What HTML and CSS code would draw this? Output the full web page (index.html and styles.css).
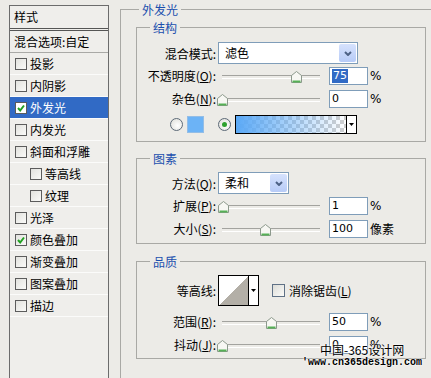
FILE: index.html
```html
<!DOCTYPE html>
<html lang="zh-CN">

<head>
    <meta charset="UTF-8">
    <title>图层样式 - 外发光</title>
    <link rel="stylesheet" href="styles.css">
</head>

<body>

    <div class="dialog">
        <div class="style-list">
            <div class="list-head">样式</div>
            <div class="list-blend">混合选项:自定</div>
            <div class="list-item"><span class="check"></span>投影</div>
            <div class="list-item"><span class="check"></span>内阴影</div>
            <div class="list-item active"><span class="check on"><svg viewBox="0 0 10 10"><path d="M2 5 L4.2 7.5 L8 2.5"/></svg></span>外发光</div>
            <div class="list-item"><span class="check"></span>内发光</div>
            <div class="list-item"><span class="check"></span>斜面和浮雕</div>
            <div class="list-item sub"><span class="check"></span>等高线</div>
            <div class="list-item sub"><span class="check"></span>纹理</div>
            <div class="list-item"><span class="check"></span>光泽</div>
            <div class="list-item"><span class="check on"><svg viewBox="0 0 10 10"><path d="M2 5 L4.2 7.5 L8 2.5"/></svg></span>颜色叠加</div>
            <div class="list-item"><span class="check"></span>渐变叠加</div>
            <div class="list-item"><span class="check"></span>图案叠加</div>
            <div class="list-item"><span class="check"></span>描边</div>
        </div>

        <div class="panel">
            <div class="outer">
                <div class="group-title outer-title">外发光</div>

                <!-- 结构 -->
                <div class="group first">
                    <div class="group-title">结构</div>
                    <div class="row select-row">
                        <span class="label">混合模式:</span>
                        <div class="select wide">
                            <span class="select-value">滤色</span>
                            <span class="select-btn"><svg viewBox="0 0 8 5"><path d="M1 1 L4 4 L7 1"/></svg></span>
                        </div>
                    </div>
                    <div class="row">
                        <span class="label">不透明度(<u>O</u>):</span>
                        <div class="slider"><span class="thumb" style="left: 76%"><svg viewBox="0 0 11 12"><polygon points="0.5,4.5 5.5,0.5 10.5,4.5 10.5,11.5 0.5,11.5"/><path d="M1.5 10.5 H9.5"/></svg></span></div>
                        <div class="num"><span class="sel">75</span></div>
                        <span class="unit">%</span>
                    </div>
                    <div class="row">
                        <span class="label">杂色(<u>N</u>):</span>
                        <div class="slider"><span class="thumb" style="left: 0%"><svg viewBox="0 0 11 12"><polygon points="0.5,4.5 5.5,0.5 10.5,4.5 10.5,11.5 0.5,11.5"/><path d="M1.5 10.5 H9.5"/></svg></span></div>
                        <div class="num">0</div>
                        <span class="unit">%</span>
                    </div>
                    <div class="row color-row">
                        <span class="radio"></span>
                        <span class="swatch"></span>
                        <span class="radio on"></span>
                        <div class="gradient">
                            <span class="grad-fill"></span>
                            <span class="grad-arrow"><svg viewBox="0 0 5 3"><polygon points="0,0 5,0 2.5,3"/></svg></span>
                        </div>
                    </div>
                </div>

                <!-- 图素 -->
                <div class="group">
                    <div class="group-title">图素</div>
                    <div class="row select-row">
                        <span class="label">方法(<u>Q</u>):</span>
                        <div class="select short">
                            <span class="select-value">柔和</span>
                            <span class="select-btn"><svg viewBox="0 0 8 5"><path d="M1 1 L4 4 L7 1"/></svg></span>
                        </div>
                    </div>
                    <div class="row">
                        <span class="label">扩展(<u>P</u>):</span>
                        <div class="slider"><span class="thumb" style="left: 1%"><svg viewBox="0 0 11 12"><polygon points="0.5,4.5 5.5,0.5 10.5,4.5 10.5,11.5 0.5,11.5"/><path d="M1.5 10.5 H9.5"/></svg></span></div>
                        <div class="num">1</div>
                        <span class="unit">%</span>
                    </div>
                    <div class="row">
                        <span class="label">大小(<u>S</u>):</span>
                        <div class="slider"><span class="thumb" style="left: 44%"><svg viewBox="0 0 11 12"><polygon points="0.5,4.5 5.5,0.5 10.5,4.5 10.5,11.5 0.5,11.5"/><path d="M1.5 10.5 H9.5"/></svg></span></div>
                        <div class="num">100</div>
                        <span class="unit cjk">像素</span>
                    </div>
                </div>

                <!-- 品质 -->
                <div class="group last">
                    <div class="group-title">品质</div>
                    <div class="row contour-row">
                        <span class="label">等高线:</span>
                        <div class="contour">
                            <span class="contour-preview"></span>
                            <span class="contour-arrow"><svg viewBox="0 0 5 3"><polygon points="0,0 5,0 2.5,3"/></svg></span>
                        </div>
                        <span class="box"></span>
                        <span class="box-label">消除锯齿(<u>L</u>)</span>
                    </div>
                    <div class="row range-row">
                        <span class="label">范围(<u>R</u>):</span>
                        <div class="slider"><span class="thumb" style="left: 50%"><svg viewBox="0 0 11 12"><polygon points="0.5,4.5 5.5,0.5 10.5,4.5 10.5,11.5 0.5,11.5"/><path d="M1.5 10.5 H9.5"/></svg></span></div>
                        <div class="num">50</div>
                        <span class="unit">%</span>
                    </div>
                    <div class="row">
                        <span class="label">抖动(<u>J</u>):</span>
                        <div class="slider"><span class="thumb" style="left: 0%"><svg viewBox="0 0 11 12"><polygon points="0.5,4.5 5.5,0.5 10.5,4.5 10.5,11.5 0.5,11.5"/><path d="M1.5 10.5 H9.5"/></svg></span></div>
                        <div class="num">0</div>
                        <span class="unit">%</span>
                    </div>
                </div>
            </div>
        </div>
    </div>

    <div class="watermark">
        <div class="wm-title">中国-365设计网</div>
        <div class="wm-url">'www.cn365design.com</div>
    </div>

</body>

</html>
```

FILE: styles.css
```css
* {
    box-sizing: border-box;
}

body {
    margin: 0;
    width: 431px;
    height: 378px;
    overflow: hidden;
    position: relative;
    background: #ecebe7;
    font-family: "Noto Sans CJK SC", "Noto Sans", sans-serif;
    font-size: 12px;
    color: #000;
}

.dialog {
    display: flex;
    height: 378px;
    padding: 5px 0 0 9px;
}

/* left style list */
.style-list {
    width: 100px;
    flex-shrink: 0;
    border: 1px solid #6c6c6c;
    border-bottom: none;
    background: #efeeeb;
}

.list-head {
    height: 25px;
    line-height: 22px;
    padding-left: 4px;
    border-bottom: 3px double #555;
}

.list-blend {
    height: 22px;
    line-height: 21px;
    padding-left: 4px;
    border-bottom: 1px solid #a9a9a6;
}

.list-item {
    display: flex;
    align-items: center;
    height: 22px;
    padding-left: 5px;
    border-bottom: 1px solid #fbfbfa;
}

.list-item.sub {
    padding-left: 20px;
}

.list-item.active {
    background: #316ac5;
    color: #fff;
}

.check {
    width: 12px;
    height: 12px;
    margin-right: 3px;
    border: 1px solid #5c5c5c;
    background: linear-gradient(135deg, #e2e2de, #fafaf8);
    display: flex;
}

.active .check {
    background: #fff;
}

.check svg {
    width: 10px;
    height: 10px;
}

.check path {
    fill: none;
    stroke: #21a121;
    stroke-width: 2;
}

/* right side */
.panel {
    flex: 1;
    display: flex;
    flex-direction: column;
    margin-left: 11px;
    padding-top: 4px;
}

.outer {
    flex: 1;
    margin-right: -12px;
    border-top: 1px solid #a9a9a5;
    border-left: 1px solid #a9a9a5;
}

.group-title {
    width: fit-content;
    margin: -7px 0 0 13px;
    padding: 0 3px;
    line-height: 14px;
    background: #ecebe7;
    color: #1b4fae;
}

.outer-title {
    margin-left: 18px;
}

.group {
    width: 290px;
    margin: 16px 0 0 15px;
    border: 1px solid #a9a9a5;
    padding-bottom: 3px;
}

.group.first {
    margin-top: 10px;
    padding-bottom: 7px;
}

.group.last {
    margin-top: 17px;
    padding-bottom: 2px;
}

.row {
    display: flex;
    align-items: center;
    height: 23px;
}

.select-row {
    height: 22px;
    margin-top: 6px;
}

.first .select-row {
    margin-top: 7px;
}

.label {
    width: 79px;
    margin-right: 2px;
    text-align: right;
    white-space: nowrap;
}

.select {
    display: flex;
    height: 22px;
    border: 1px solid #7f9db9;
    background: #fff;
}

.select.wide {
    width: 140px;
}

.select.short {
    width: 71px;
}

.select-value {
    flex: 1;
    padding-left: 6px;
    line-height: 20px;
}

.select-btn {
    width: 17px;
    margin: 1px;
    border-radius: 2px;
    background: linear-gradient(#d6e2fd, #b7cbf7);
    display: flex;
    align-items: center;
    justify-content: center;
}

.select-btn svg {
    width: 8px;
    height: 5px;
}

.select-btn path {
    fill: none;
    stroke: #4d6185;
    stroke-width: 2;
}

.slider {
    position: relative;
    width: 98px;
    height: 14px;
    margin-left: 4px;
}

.slider::before {
    content: "";
    position: absolute;
    left: 0;
    right: 0;
    top: 6px;
    height: 2px;
    border-top: 1px solid #a3a39f;
    border-bottom: 1px solid #fff;
}

.thumb {
    position: absolute;
    top: 2px;
    width: 11px;
    height: 12px;
    margin-left: -5px;
}

.thumb svg {
    display: block;
    width: 11px;
    height: 12px;
}

.thumb polygon {
    fill: #f7f7f3;
    stroke: #8c998c;
}

.thumb path {
    fill: none;
    stroke: #56b056;
    stroke-width: 2;
}

.num {
    width: 39px;
    height: 18px;
    margin-left: 9px;
    padding-left: 2px;
    border: 1px solid #7f9db9;
    background: #fff;
    font-family: "DejaVu Sans", sans-serif;
    font-size: 11px;
    line-height: 16px;
}

.num .sel {
    display: inline-block;
    height: 14px;
    margin-top: 1px;
    padding: 0 1px;
    line-height: 14px;
    background: #316ac5;
    color: #fff;
}

.unit {
    margin-left: 2px;
    font-family: "DejaVu Sans", sans-serif;
    font-size: 12px;
}

.unit.cjk {
    font-family: "Noto Sans CJK SC", sans-serif;
}

.color-row {
    height: 19px;
    margin-top: 5px;
    padding-left: 33px;
}

.radio {
    width: 13px;
    height: 13px;
    border-radius: 50%;
    border: 1px solid #5d6a78;
    background: radial-gradient(circle at 60% 60%, #fff, #dcdcd6);
    display: flex;
    align-items: center;
    justify-content: center;
}

.radio.on {
    margin-left: 14px;
}

.radio.on::after {
    content: "";
    width: 5px;
    height: 5px;
    border-radius: 50%;
    background: #2ea12e;
}

.swatch {
    width: 17px;
    height: 17px;
    margin-left: 4px;
    border: 1px solid #93bde6;
    background: #6cb3f6;
}

.gradient {
    display: flex;
    width: 122px;
    height: 19px;
    margin-left: 4px;
    border: 1px solid #000;
}

.grad-fill {
    flex: 1;
    background:
        linear-gradient(to right, #5ba9f6, rgba(91, 169, 246, 0)),
        conic-gradient(#cfcfcf 25%, #fff 0 50%, #cfcfcf 0 75%, #fff 0) 0 0 / 8px 8px;
}

.grad-arrow,
.contour-arrow {
    width: 10px;
    border-left: 1px solid #000;
    background: #fff;
    display: flex;
    align-items: center;
    justify-content: center;
}

.grad-arrow svg,
.contour-arrow svg {
    width: 5px;
    height: 3px;
}

.contour-row {
    height: 31px;
    margin-top: 6px;
}

.contour {
    display: flex;
    width: 41px;
    height: 31px;
    border: 1px solid #000;
}

.contour-preview {
    width: 29px;
    background: linear-gradient(to top left, #b3afa7 50%, #fff 50%);
}

.box {
    width: 13px;
    height: 13px;
    margin-left: 13px;
    border: 1px solid #5f7186;
    background: linear-gradient(135deg, #dcdcd7, #fbfbf9);
}

.box-label {
    margin-left: 4px;
}

.range-row {
    margin-top: 4px;
}

/* site watermark over the screenshot */
.watermark {
    position: absolute;
    left: 302px;
    top: 342px;
    color: #000;
    text-shadow: 0 0 2px #fff, 0 0 2px #fff;
}

.wm-title {
    margin-left: 18px;
    font-size: 12px;
    line-height: 15px;
}

.wm-url {
    font-family: "Liberation Mono", monospace;
    font-size: 10px;
    line-height: 12px;
    font-weight: bold;
}
```
